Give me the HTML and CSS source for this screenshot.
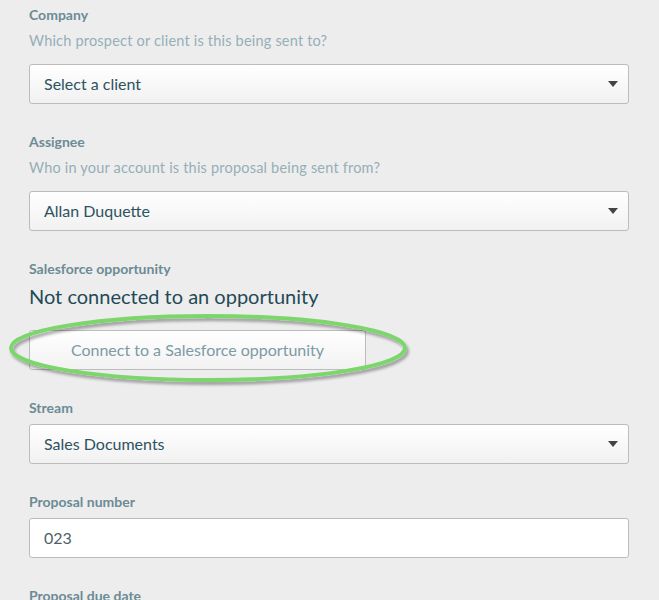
FILE: index.html
```html
<!DOCTYPE html>
<html>
<head>
<meta charset="utf-8">
<link rel="stylesheet" href="styles.css">
</head>
<body>
<div class="form">
  <div class="field">
    <div class="label">Company</div>
    <div class="help">Which prospect or client is this being sent to?</div>
    <div class="select with-help"><span>Select a client</span><span class="caret"></span></div>
  </div>
  <div class="field">
    <div class="label">Assignee</div>
    <div class="help">Who in your account is this proposal being sent from?</div>
    <div class="select with-help"><span>Allan Duquette</span><span class="caret"></span></div>
  </div>
  <div class="field sf">
    <div class="label">Salesforce opportunity</div>
    <div class="status">Not connected to an opportunity</div>
    <div class="btn-wrap">
      <button class="btn">Connect to a Salesforce opportunity</button>
      <svg class="ring" width="420" height="90" viewBox="0 0 420 90">
        <defs>
          <filter id="sh" x="-10%" y="-30%" width="120%" height="160%">
            <feGaussianBlur in="SourceAlpha" stdDeviation="1.5"/>
            <feOffset dx="2" dy="3" result="b"/>
            <feComponentTransfer><feFuncA type="linear" slope="0.35"/></feComponentTransfer>
            <feMerge><feMergeNode/><feMergeNode in="SourceGraphic"/></feMerge>
          </filter>
        </defs>
        <ellipse cx="208" cy="46" rx="197" ry="32" fill="none" stroke="#7bd66c" stroke-width="4" filter="url(#sh)"/>
      </svg>
    </div>
  </div>
  <div class="field">
    <div class="label">Stream</div>
    <div class="select"><span>Sales Documents</span><span class="caret"></span></div>
  </div>
  <div class="field">
    <div class="label">Proposal number</div>
    <div class="input">023</div>
  </div>
  <div class="field">
    <div class="label">Proposal due date</div>
  </div>
</div>
</body>
</html>
```

FILE: styles.css
```css
html, body {
  margin: 0;
  padding: 0;
  background: #ededed;
  height: 600px;
  overflow: hidden;
}
body {
  font-family: "Lato", "Open Sans", sans-serif;
}
.form {
  width: 600px;
  padding: 7px 0 0 29px;
}
.field {
  margin-bottom: 30px;
}
.label {
  font-size: 14px;
  line-height: 16px;
  font-weight: 700;
  color: #6b8b95;
  margin-bottom: 8px;
}
.help {
  font-size: 14.5px;
  line-height: 16px;
  letter-spacing: 0.2px;
  color: #95afb7;
  margin-top: 10px;
}
.select.with-help {
  margin-top: 15px;
}
.select, .input {
  box-sizing: border-box;
  height: 40px;
  border: 1px solid #bcbcbc;
  border-radius: 3px;
  display: flex;
  align-items: center;
  justify-content: space-between;
  padding: 0 10px 1px 14px;
  font-size: 16px;
  color: #2d5260;
}
.select {
  background: linear-gradient(#ffffff, #f1f1f1);
}
.input {
  background: #fff;
  color: #4f6167;
}
.caret {
  width: 0;
  height: 0;
  border-left: 5px solid transparent;
  border-right: 5px solid transparent;
  border-top: 6px solid #444;
}
.status {
  font-size: 20px;
  line-height: 22px;
  color: #1f4a57;
  margin-top: 5px;
}
.btn-wrap {
  position: relative;
  margin-top: 23px;
}
.btn {
  display: block;
  width: 337px;
  height: 40px;
  border: 1px solid #bcbcbc;
  border-radius: 3px;
  background: linear-gradient(#ffffff, #f2f2f2);
  font-family: inherit;
  font-size: 16px;
  color: #7c9ba4;
  padding: 0 0 1px;
}
.ring {
  position: absolute;
  left: -29px;
  top: -28px;
  pointer-events: none;
}
```
